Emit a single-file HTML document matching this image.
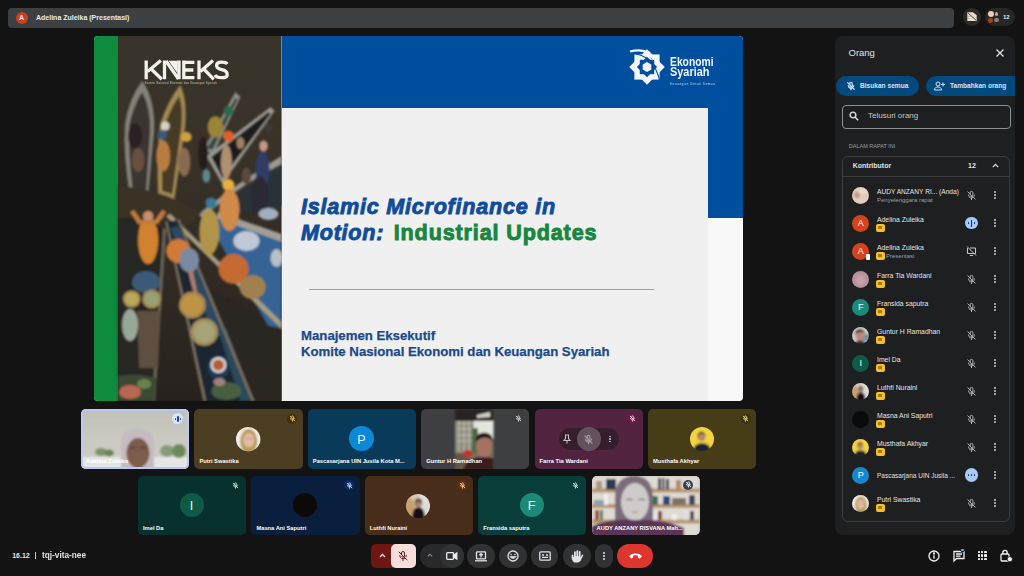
<!DOCTYPE html>
<html><head><meta charset="utf-8">
<style>
*{margin:0;padding:0;box-sizing:border-box}
html,body{width:1024px;height:576px;overflow:hidden;background:#131314;font-family:"Liberation Sans",sans-serif;color:#e3e3e3}
.a{position:absolute}
.t{position:absolute;white-space:nowrap}
svg.a{overflow:visible}
</style></head><body>
<div class="a" style="left:8px;top:8px;width:946px;height:20px;background:#3c4043;border-radius:4px"></div>
<div class="a" style="left:15.5px;top:11.5px;width:12px;height:12px;border-radius:50%;background:#c8401e"></div>
<div class="t" style="left:15.5px;top:13px;width:12px;text-align:center;font-size:7px;font-weight:bold;color:#fde;line-height:10px">A</div>
<div class="t" style="left:36px;top:12.5px;font-size:7px;font-weight:bold;color:#e8eaed;line-height:10px">Adelina Zuleika (Presentasi)</div>
<div class="a" style="left:963px;top:7.8px;width:17.6px;height:18px;border-radius:50%;background:#2b2a2a"></div>
<svg class="a" style="left:966.5px;top:12.3px" width="10" height="9.2" viewBox="0 0 10 9.2"><path d="M0.3 0.3H6L9.7 3.2V8.9H0.3z" fill="#eedccb"/><path d="M0.8 0.8L9.2 8.4" stroke="#3a3430" stroke-width="0.9"/><path d="M1 4.5H4M1 6.5H3" stroke="#b8a898" stroke-width="0.6"/></svg>
<div class="a" style="left:984.7px;top:7.8px;width:30.6px;height:18px;border-radius:9px;background:#272727"></div>
<div class="a" style="left:988px;top:10.8px;width:6.2px;height:6.2px;border-radius:50%;background:#e6cfc0"></div>
<div class="a" style="left:994.8px;top:12px;width:3.6px;height:3.6px;border-radius:50%;background:#b8a8a8"></div>
<div class="a" style="left:988.3px;top:17.8px;width:4.8px;height:4.8px;border-radius:50%;background:#a8401c"></div>
<div class="a" style="left:994.4px;top:18.4px;width:4.2px;height:4px;border-radius:50%;background:#8a8080"></div>
<div class="t" style="left:1003px;top:13px;font-size:6px;font-weight:bold;color:#e3e3e3;line-height:8px">12</div>
<div class="a" style="left:94px;top:36px;width:649px;height:365px;border-radius:4px;overflow:hidden;background:#f8f8f9">
  <div class="a" style="left:0;top:0;width:24px;height:365px;background:#0f8b3d"></div>
  <svg class="a" style="left:24px;top:0" width="163.6" height="365" viewBox="0 0 163 365" preserveAspectRatio="none"><defs><filter id="bl" x="-10%" y="-10%" width="120%" height="120%"><feGaussianBlur stdDeviation="0.9"/></filter><linearGradient id="wat" x1="0" y1="0" x2="0" y2="1"><stop offset="0" stop-color="#38342a"/><stop offset="0.3" stop-color="#393229"/><stop offset="0.7" stop-color="#2f2922"/><stop offset="1" stop-color="#27221e"/></linearGradient></defs><rect width="163" height="365" fill="url(#wat)"/><g filter="url(#bl)"><path d="M24 45 Q37 62 36 95 L30 160 L12 160 Q5 120 7 88 Q11 62 24 45z" fill="#85827a"/><path d="M24 56 Q33 72 32 96 L28 156 L15 156 Q10 118 11 90 Q15 70 24 56z" fill="#3a3632"/><path d="M62 49 Q69 62 67 90 L56 165 L40 160 Q38 118 42 88 Q50 64 62 49z" fill="#a08a50"/><path d="M61 60 Q65 72 63 92 L54 158 L44 155 Q43 118 46 92 Q52 72 61 60z" fill="#463a28"/><path d="M117 56 L122 61 L95 118 L85 114z" fill="#8a8e86"/><path d="M117 62 L119 64 L94 114 L89 112z" fill="#3a4644"/><ellipse cx="110" cy="75" rx="5" ry="5" fill="#2a6a50"/><path d="M152 71 L156 75 L104 148 L88 120z" fill="#9a9a90"/><path d="M150 76 L152 78 L104 142 L93 121z" fill="#1e1e1c"/><path d="M163 120 L163 128 Q120 150 84 182 L80 178 Q120 146 163 120z" fill="#9a9a90"/><path d="M163 128 Q124 152 88 182 L163 170z" fill="#2c3038"/><ellipse cx="97" cy="91" rx="7.8" ry="11.0" fill="#9a8434"/><ellipse cx="17" cy="100" rx="7.0" ry="12.8" fill="#2a2420"/><ellipse cx="20" cy="124" rx="6.2" ry="11.9" fill="#6a5040"/><ellipse cx="22" cy="146" rx="4.7" ry="8.5" fill="#3a3430"/><circle cx="47" cy="90" r="4.5" fill="#d8d0c4"/><ellipse cx="44" cy="99" rx="4.7" ry="5.1" fill="#3a5a80"/><ellipse cx="45" cy="120" rx="7.0" ry="15.3" fill="#b87c40"/><ellipse cx="68" cy="101" rx="5.5" ry="5.1" fill="#d0a040"/><ellipse cx="66" cy="126" rx="6.2" ry="14.4" fill="#8a6a50"/><ellipse cx="85" cy="118" rx="4.7" ry="17.0" fill="#241e1c"/><ellipse cx="88" cy="140" rx="3.9" ry="6.8" fill="#5a8a90"/><circle cx="110" cy="100" r="5.5" fill="#e0602a"/><ellipse cx="108" cy="126" rx="5.5" ry="17.0" fill="#b09070"/><ellipse cx="145" cy="110" rx="4.3" ry="5.5" fill="#c09888"/><ellipse cx="144" cy="134" rx="7.0" ry="18.7" fill="#2e3c68"/><ellipse cx="122" cy="107" rx="3.9" ry="6.0" fill="#a08060"/><ellipse cx="128" cy="140" rx="4.7" ry="8.5" fill="#5a4a40"/><ellipse cx="150" cy="92" rx="4.7" ry="4.2" fill="#3a3a36"/><path d="M0 150 Q40 152 84 176 L70 190 Q40 180 0 182z" fill="#3a3027"/><path d="M86 250 L163 290 V365 H130z" fill="#2c2520"/><path d="M92 178 L163 206 V292 L150 290 Q120 240 92 190z" fill="#346494"/><path d="M48 180 L52 178 L163 286 V293z" fill="#a89c80"/><path d="M100 176 L163 198 V206 L98 182z" fill="#a0a098"/><path d="M47 186 L60 184 L135 365 H86z" fill="#1c2630"/><path d="M52 192 L60 190 L110 300 L96 300z" fill="#2e5270" opacity="0.8"/><path d="M100 294 L108 292 L134 365 H122z" fill="#2a4a5a"/><path d="M47 186 L49 185 L88 365 H85z" fill="#7a7060"/><path d="M59 184 L61 183 L136 365 H133z" fill="#7a7060"/><path d="M0 182 H14 L47 194 L36 365 H0z" fill="#262624"/><path d="M45 192 L48 193 L37 365 H34z" fill="#6a6458"/><path d="M19 275 L42 275 L40 332 L21 332z" fill="#5e5040"/><ellipse cx="30" cy="204" rx="10" ry="24" fill="#d2822e"/><circle cx="30" cy="180" r="5" fill="#c89070"/><path d="M12 176 L20 188 L40 188 L48 176 L44 174 L37 184 L23 184 L16 174z" fill="#c07a40"/><circle cx="92.7" cy="167" r="5.5" fill="#3a7a9a"/><ellipse cx="91" cy="196" rx="10" ry="23" fill="#b09448"/><circle cx="110" cy="149" r="6" fill="#e8b040"/><ellipse cx="111" cy="174" rx="10" ry="21" fill="#d08a48"/><ellipse cx="141" cy="160" rx="9" ry="20" fill="#2c2a34"/><ellipse cx="150" cy="178" rx="10" ry="6" fill="#a0b0c0"/><ellipse cx="60" cy="215" rx="12" ry="12" fill="#d07a38"/><ellipse cx="71" cy="224" rx="10" ry="12" fill="#7a8aa0"/><path d="M74 232 L80 262 L77 263 L70 236z" fill="#b08070"/><ellipse cx="28" cy="246" rx="14" ry="11" fill="#3a5a78"/><ellipse cx="128" cy="205" rx="13" ry="10" fill="#c0c8d8"/><ellipse cx="115" cy="233" rx="15" ry="15" fill="#c46a32"/><ellipse cx="134" cy="251" rx="13" ry="12" fill="#a08050"/><ellipse cx="158" cy="222" rx="6" ry="9" fill="#b8c0c8"/><circle cx="13.7" cy="263" r="8.8" fill="#a08850"/><circle cx="13.7" cy="263" r="6.864000000000001" fill="#b8a858"/><circle cx="33.6" cy="263" r="9.5" fill="#a08850"/><circle cx="33.6" cy="263" r="7.41" fill="#98a074"/><circle cx="74" cy="269" r="13.5" fill="#a88650"/><circle cx="74" cy="269" r="10.530000000000001" fill="#c09444"/><circle cx="86" cy="296" r="13.7" fill="#a48c5c"/><circle cx="86" cy="296" r="10.686" fill="#a4a474"/><ellipse cx="12" cy="289" rx="8" ry="16" fill="#98a898"/><circle cx="100" cy="332" r="11" fill="#1e3a50"/><circle cx="100" cy="329" r="8" fill="#d8d8e0"/><circle cx="100" cy="329" r="5.6" fill="#b85a30"/><ellipse cx="108" cy="355" rx="15" ry="9" fill="#4a6040"/><ellipse cx="101" cy="346" rx="6" ry="4" fill="#a08080"/><path d="M0 340 Q18 336 38 342 L36 365 H0z" fill="#3a4a30"/><ellipse cx="12" cy="356" rx="11" ry="7" fill="#b86850"/><ellipse cx="26" cy="348" rx="7" ry="5" fill="#6a8050"/></g></svg>
  <div class="a" style="left:187.5px;top:0;width:461.5px;height:72px;background:#004f9e"></div>
  <div class="a" style="left:613px;top:72px;width:36px;height:110px;background:#004f9e"></div>
  <div class="a" style="left:187.5px;top:71.8px;width:426.3px;height:293.2px;background:#f0f0f1"></div>
</div>
<div class="t" style="left:301px;top:193.6px;font-size:21.6px;font-weight:bold;font-style:italic;color:#0f4c9a;line-height:26px;letter-spacing:0.75px;-webkit-text-stroke:0.9px #0f4c9a">Islamic Microfinance in<br>Motion:<span style="margin-left:9.5px;color:#17873f;font-style:normal;letter-spacing:0.85px;-webkit-text-stroke:0.9px #17873f">Industrial Updates</span></div>
<svg class="a" style="left:0;top:0" width="300" height="100" viewBox="0 0 300 100" fill="none" stroke="#f4f1ec" stroke-width="3.3"><path d="M146.2 60.6V79.3M160.8 60.6L147.6 71.6M151.2 69L161.8 79.3"/><path d="M164.5 60.6V79.3M179 60.6V79.3M166 61L178.5 79"/><path d="M168.5 60.8H177.6V73.5z" fill="#f4f1ec" stroke="none"/><path d="M183.8 60.6V79.3M182.2 62.3H194.4M182.2 70H193.4M182.2 77.6H194.4"/><path d="M199 60.6V79.3M213 60.6L200.4 71.6M203.8 69L213.8 79.3"/><path d="M227.3 64Q226 62.2 221.2 62.2Q216.6 62.2 216.6 65.6Q216.6 68.6 221.6 69.6Q227.2 70.6 227.2 74.4Q227.2 77.7 221.6 77.7Q216.4 77.7 215 75"/></svg>
<div class="t" style="left:145px;top:82.4px;font-size:2.7px;color:#d8d0c4;line-height:4px;letter-spacing:0.3px">Komite Nasional Ekonomi dan Keuangan Syariah</div>
<svg class="a" style="left:629px;top:48px" width="37" height="38" viewBox="0 0 37 38"><g transform="translate(18 19)"><rect x="-12.6" y="-12.6" width="25.2" height="25.2" fill="#f4f6fa"/><rect x="-12.6" y="-12.6" width="25.2" height="25.2" fill="#f4f6fa" transform="rotate(45)"/><rect x="-7.2" y="-7.2" width="14.4" height="14.4" fill="#004f9e"/><rect x="-7.2" y="-7.2" width="14.4" height="14.4" fill="#004f9e" transform="rotate(45)"/><path d="M0 -5L4.3 -2.5V2.5L0 5L-4.3 2.5V-2.5z" fill="#f4f6fa"/></g><path d="M1 3.5Q12 0.5 21 5" fill="none" stroke="#f4f6fa" stroke-width="2.2"/><path d="M2 5.5Q25 6 31 34" fill="none" stroke="#004f9e" stroke-width="1.2"/><path d="M22 9.5L23.5 12.5" stroke="#c8a070" stroke-width="0.9"/></svg>
<div class="t" style="left:669.5px;top:54.5px;font-size:12px;font-weight:bold;color:#f4f6fa;line-height:14px;transform:scaleX(0.86);transform-origin:0 0">Ekonomi</div>
<div class="t" style="left:669.5px;top:64.8px;font-size:12px;font-weight:bold;color:#f4f6fa;line-height:14px;transform:scaleX(0.91);transform-origin:0 0">Syariah</div>
<div class="t" style="left:670px;top:81.5px;font-size:2.8px;color:#dde6f5;line-height:4px;letter-spacing:0.75px">Keuangan Untuk Semua</div>
<div class="a" style="left:309.4px;top:289px;width:345px;height:1px;background:#a0a0a0"></div>
<div class="t" style="left:301px;top:327.5px;font-size:13.2px;font-weight:bold;color:#1a4a8a;line-height:16px;-webkit-text-stroke:0.25px #1a4a8a">Manajemen Eksekutif<br>Komite Nasional Ekonomi dan Keuangan Syariah</div>
<div class="a" style="left:835.3px;top:36px;width:180px;height:499px;border-radius:8px;background:#1e1f20;overflow:hidden">
<div class="a" style="left:1.2px;top:40px;width:83px;height:20px;border-radius:10px;background:#024a7e"></div>
<div class="a" style="left:90.7px;top:40px;width:100px;height:20px;border-radius:10px;background:#024a7e"></div>
</div>
<div class="t" style="left:848.5px;top:47px;font-size:9.5px;color:#e3e3e3;line-height:12px">Orang</div>
<svg class="a" style="left:995.5px;top:48.5px" width="8" height="8" viewBox="0 0 8 8" stroke="#e3e3e3" stroke-width="1.3"><path d="M0.5 0.5L7.5 7.5M7.5 0.5L0.5 7.5"/></svg>
<svg class="a" style="left:846.0px;top:81.0px" width="10" height="10" viewBox="0 0 24 24" fill="none" stroke="#d3e3fd" stroke-width="2.88" stroke-linecap="round"><path d="M9 9V6a3 3 0 0 1 6 0v5.5"/><path d="M9.5 13.5A3 3 0 0 0 14.6 13"/><path d="M5.5 11a6.5 6.5 0 0 0 10.3 5.3M18.5 11a6.4 6.4 0 0 1-.6 2.6"/><path d="M12 17.5V21"/><path d="M4 4l16 16"/></svg>
<div class="t" style="left:860px;top:81px;font-size:6.6px;font-weight:bold;color:#d3e3fd;line-height:10px">Bisukan semua</div>
<svg class="a" style="left:934px;top:81px" width="11" height="10" viewBox="0 0 22 20" fill="none" stroke="#d3e3fd" stroke-width="2"><circle cx="8" cy="6" r="4"/><path d="M1 18c0-4 3-6 7-6s7 2 7 6z"/><path d="M18 3v8M14 7h8"/></svg>
<div class="t" style="left:950px;top:81px;font-size:6.6px;font-weight:bold;color:#d3e3fd;line-height:10px">Tambahkan orang</div>
<div class="a" style="left:842px;top:105px;width:169px;height:23.5px;border:1px solid #8e918f;border-radius:4px"></div>
<svg class="a" style="left:849px;top:111px" width="10" height="10" viewBox="0 0 10 10" fill="none" stroke="#e3e3e3" stroke-width="1.4"><circle cx="4" cy="4" r="2.9"/><path d="M6.2 6.2L9.2 9.2"/></svg>
<div class="t" style="left:868px;top:111px;font-size:8px;color:#c4c7c5;line-height:10px">Telusuri orang</div>
<div class="t" style="left:848.8px;top:142px;font-size:5.5px;color:#9aa0a6;line-height:8px">DALAM RAPAT INI</div>
<div class="a" style="left:842.3px;top:155.8px;width:168px;height:366px;border:1px solid #3c3d3f;border-radius:6px"></div>
<div class="a" style="left:843px;top:176px;width:166px;height:1px;background:#3c3d3f"></div>
<div class="t" style="left:852.7px;top:161px;font-size:7px;font-weight:bold;color:#e3e3e3;line-height:9px">Kontributor</div>
<div class="t" style="left:968px;top:161px;font-size:7px;font-weight:bold;color:#e3e3e3;line-height:9px">12</div>
<svg class="a" style="left:992px;top:162.5px" width="7" height="5" viewBox="0 0 7 5" fill="none" stroke="#e3e3e3" stroke-width="1.2"><path d="M0.8 4.2L3.5 1.4L6.2 4.2"/></svg>
<svg class="a" style="left:852.2px;top:186.5px" width="17" height="17" viewBox="0 0 24 24"><defs><clipPath id="av1"><circle cx="12" cy="12" r="12"/></clipPath><filter id="avf1" x="-20%" y="-20%" width="140%" height="140%"><feGaussianBlur stdDeviation="1.27"/></filter></defs><g clip-path="url(#av1)"><g filter="url(#avf1)"><rect x="-2" y="-2" width="28" height="28" fill="#e4ccbc"/><ellipse cx="7" cy="11" rx="4" ry="5" fill="#c49888"/><ellipse cx="15" cy="6" rx="8" ry="3" fill="#ecdccc"/></g></g></svg>
<div class="t" style="left:877px;top:186.8px;font-size:6.6px;color:#e6e6e6;line-height:9px">AUDY ANZANY RI... (Anda)</div>
<div class="t" style="left:877px;top:195.5px;font-size:6px;color:#9aa0a6;line-height:8px">Penyelenggara rapat</div>
<svg class="a" style="left:965.5px;top:190.1px" width="11" height="11" viewBox="0 0 24 24" fill="none" stroke="#b8bbbd" stroke-width="2.0727272727272723" stroke-linecap="round"><path d="M9 9V6a3 3 0 0 1 6 0v5.5"/><path d="M9.5 13.5A3 3 0 0 0 14.6 13"/><path d="M5.5 11a6.5 6.5 0 0 0 10.3 5.3M18.5 11a6.4 6.4 0 0 1-.6 2.6"/><path d="M12 17.5V21"/><path d="M4 4l16 16"/></svg>
<div class="a" style="left:994.3px;top:190.95000000000002px;width:2.2px;height:2.2px;border-radius:50%;background:#c8cacb"></div><div class="a" style="left:994.3px;top:193.9px;width:2.2px;height:2.2px;border-radius:50%;background:#c8cacb"></div><div class="a" style="left:994.3px;top:196.85px;width:2.2px;height:2.2px;border-radius:50%;background:#c8cacb"></div>
<div class="a" style="left:852.2px;top:214.5px;width:17px;height:17px;border-radius:50%;background:#d4431d"></div>
<div class="t" style="left:852.2px;top:218px;width:17px;text-align:center;font-size:9px;color:#fff;line-height:10px">A</div>
<div class="t" style="left:877px;top:214.8px;font-size:6.85px;color:#e6e6e6;line-height:9px">Adelina Zuleika</div>
<div class="a" style="left:876.2px;top:223.5px;width:8.8px;height:8.3px;border-radius:2px;background:#f2c12e"></div>
<div class="a" style="left:878.3px;top:225.6px;width:3.6px;height:3.8px;background:#b0780c;border-radius:0.5px"></div>
<div class="a" style="left:965px;top:216.6px;width:12.8px;height:12.8px;border-radius:50%;background:#a8c7fa"></div>
<div class="a" style="left:970.6px;top:219.5px;width:1.6px;height:7px;border-radius:1px;background:#062e6f"></div>
<div class="a" style="left:967.7px;top:221.8px;width:1.6px;height:2.4px;border-radius:1px;background:#062e6f"></div>
<div class="a" style="left:973.5px;top:221.8px;width:1.6px;height:2.4px;border-radius:1px;background:#062e6f"></div>
<div class="a" style="left:994.3px;top:218.95000000000002px;width:2.2px;height:2.2px;border-radius:50%;background:#c8cacb"></div><div class="a" style="left:994.3px;top:221.9px;width:2.2px;height:2.2px;border-radius:50%;background:#c8cacb"></div><div class="a" style="left:994.3px;top:224.85px;width:2.2px;height:2.2px;border-radius:50%;background:#c8cacb"></div>
<div class="a" style="left:852.2px;top:242.5px;width:17px;height:17px;border-radius:50%;background:#d4431d"></div>
<div class="t" style="left:852.2px;top:246px;width:17px;text-align:center;font-size:9px;color:#fff;line-height:10px">A</div>
<div class="t" style="left:877px;top:242.8px;font-size:6.85px;color:#e6e6e6;line-height:9px">Adelina Zuleika</div>
<div class="a" style="left:876.2px;top:251.5px;width:8.8px;height:8.3px;border-radius:2px;background:#f2c12e"></div>
<div class="a" style="left:878.3px;top:253.6px;width:3.6px;height:3.8px;background:#b0780c;border-radius:0.5px"></div>
<div class="t" style="left:886px;top:252px;font-size:6px;color:#9aa0a6;line-height:8px">Presentasi</div>
<div class="a" style="left:866px;top:254px;width:4px;height:6px;background:#fff;border-radius:1px"></div>
<svg class="a" style="left:966px;top:246px" width="11" height="10" viewBox="0 0 22 20" fill="none" stroke="#c4c7c5" stroke-width="2"><path d="M3 4v11h16V4M8 4h11"/><path d="M8 19h6"/><path d="M2 1l18 18"/></svg>
<div class="a" style="left:994.3px;top:246.95000000000002px;width:2.2px;height:2.2px;border-radius:50%;background:#c8cacb"></div><div class="a" style="left:994.3px;top:249.9px;width:2.2px;height:2.2px;border-radius:50%;background:#c8cacb"></div><div class="a" style="left:994.3px;top:252.85px;width:2.2px;height:2.2px;border-radius:50%;background:#c8cacb"></div>
<svg class="a" style="left:852.2px;top:270.5px" width="17" height="17" viewBox="0 0 24 24"><defs><clipPath id="av2"><circle cx="12" cy="12" r="12"/></clipPath><filter id="avf2" x="-20%" y="-20%" width="140%" height="140%"><feGaussianBlur stdDeviation="1.27"/></filter></defs><g clip-path="url(#av2)"><g filter="url(#avf2)"><rect x="-2" y="-2" width="28" height="28" fill="#b8909c"/><ellipse cx="12" cy="13" rx="6" ry="7" fill="#c8a0ac"/></g></g></svg>
<div class="t" style="left:877px;top:270.8px;font-size:6.85px;color:#e6e6e6;line-height:9px">Farra Tia Wardani</div>
<div class="a" style="left:876.2px;top:279.5px;width:8.8px;height:8.3px;border-radius:2px;background:#f2c12e"></div>
<div class="a" style="left:878.3px;top:281.6px;width:3.6px;height:3.8px;background:#b0780c;border-radius:0.5px"></div>
<svg class="a" style="left:965.5px;top:274.1px" width="11" height="11" viewBox="0 0 24 24" fill="none" stroke="#b8bbbd" stroke-width="2.0727272727272723" stroke-linecap="round"><path d="M9 9V6a3 3 0 0 1 6 0v5.5"/><path d="M9.5 13.5A3 3 0 0 0 14.6 13"/><path d="M5.5 11a6.5 6.5 0 0 0 10.3 5.3M18.5 11a6.4 6.4 0 0 1-.6 2.6"/><path d="M12 17.5V21"/><path d="M4 4l16 16"/></svg>
<div class="a" style="left:994.3px;top:274.95px;width:2.2px;height:2.2px;border-radius:50%;background:#c8cacb"></div><div class="a" style="left:994.3px;top:277.9px;width:2.2px;height:2.2px;border-radius:50%;background:#c8cacb"></div><div class="a" style="left:994.3px;top:280.84999999999997px;width:2.2px;height:2.2px;border-radius:50%;background:#c8cacb"></div>
<div class="a" style="left:852.2px;top:298.5px;width:17px;height:17px;border-radius:50%;background:#1b8a77"></div>
<div class="t" style="left:852.2px;top:302px;width:17px;text-align:center;font-size:9px;color:#fff;line-height:10px">F</div>
<div class="t" style="left:877px;top:298.8px;font-size:6.85px;color:#e6e6e6;line-height:9px">Fransida saputra</div>
<div class="a" style="left:876.2px;top:307.5px;width:8.8px;height:8.3px;border-radius:2px;background:#f2c12e"></div>
<div class="a" style="left:878.3px;top:309.6px;width:3.6px;height:3.8px;background:#b0780c;border-radius:0.5px"></div>
<svg class="a" style="left:965.5px;top:302.1px" width="11" height="11" viewBox="0 0 24 24" fill="none" stroke="#b8bbbd" stroke-width="2.0727272727272723" stroke-linecap="round"><path d="M9 9V6a3 3 0 0 1 6 0v5.5"/><path d="M9.5 13.5A3 3 0 0 0 14.6 13"/><path d="M5.5 11a6.5 6.5 0 0 0 10.3 5.3M18.5 11a6.4 6.4 0 0 1-.6 2.6"/><path d="M12 17.5V21"/><path d="M4 4l16 16"/></svg>
<div class="a" style="left:994.3px;top:302.95px;width:2.2px;height:2.2px;border-radius:50%;background:#c8cacb"></div><div class="a" style="left:994.3px;top:305.9px;width:2.2px;height:2.2px;border-radius:50%;background:#c8cacb"></div><div class="a" style="left:994.3px;top:308.84999999999997px;width:2.2px;height:2.2px;border-radius:50%;background:#c8cacb"></div>
<svg class="a" style="left:852.2px;top:326.5px" width="17" height="17" viewBox="0 0 24 24"><defs><clipPath id="av3"><circle cx="12" cy="12" r="12"/></clipPath><filter id="avf3" x="-20%" y="-20%" width="140%" height="140%"><feGaussianBlur stdDeviation="1.27"/></filter></defs><g clip-path="url(#av3)"><g filter="url(#avf3)"><rect x="-2" y="-2" width="28" height="28" fill="#c8ccc8"/><rect x="14" y="10" width="12" height="10" fill="#7a90a8"/><ellipse cx="11" cy="12.5" rx="6" ry="7" fill="#c08a70"/><path d="M4 10Q5 3 11 3Q17 3 18 9Q14 6 10 7Q7 8 4 10z" fill="#2a1e1c"/><path d="M2 26Q4 19 11 19Q18 19 20 26z" fill="#2a2a2a"/></g></g></svg>
<div class="t" style="left:877px;top:326.8px;font-size:6.85px;color:#e6e6e6;line-height:9px">Guntur H Ramadhan</div>
<div class="a" style="left:876.2px;top:335.5px;width:8.8px;height:8.3px;border-radius:2px;background:#f2c12e"></div>
<div class="a" style="left:878.3px;top:337.6px;width:3.6px;height:3.8px;background:#b0780c;border-radius:0.5px"></div>
<svg class="a" style="left:965.5px;top:330.1px" width="11" height="11" viewBox="0 0 24 24" fill="none" stroke="#b8bbbd" stroke-width="2.0727272727272723" stroke-linecap="round"><path d="M9 9V6a3 3 0 0 1 6 0v5.5"/><path d="M9.5 13.5A3 3 0 0 0 14.6 13"/><path d="M5.5 11a6.5 6.5 0 0 0 10.3 5.3M18.5 11a6.4 6.4 0 0 1-.6 2.6"/><path d="M12 17.5V21"/><path d="M4 4l16 16"/></svg>
<div class="a" style="left:994.3px;top:330.95px;width:2.2px;height:2.2px;border-radius:50%;background:#c8cacb"></div><div class="a" style="left:994.3px;top:333.9px;width:2.2px;height:2.2px;border-radius:50%;background:#c8cacb"></div><div class="a" style="left:994.3px;top:336.84999999999997px;width:2.2px;height:2.2px;border-radius:50%;background:#c8cacb"></div>
<div class="a" style="left:852.2px;top:354.5px;width:17px;height:17px;border-radius:50%;background:#0e5b46"></div>
<div class="t" style="left:852.2px;top:358px;width:17px;text-align:center;font-size:9px;color:#fff;line-height:10px">I</div>
<div class="t" style="left:877px;top:354.8px;font-size:6.85px;color:#e6e6e6;line-height:9px">Imel Da</div>
<div class="a" style="left:876.2px;top:363.5px;width:8.8px;height:8.3px;border-radius:2px;background:#f2c12e"></div>
<div class="a" style="left:878.3px;top:365.6px;width:3.6px;height:3.8px;background:#b0780c;border-radius:0.5px"></div>
<svg class="a" style="left:965.5px;top:358.1px" width="11" height="11" viewBox="0 0 24 24" fill="none" stroke="#b8bbbd" stroke-width="2.0727272727272723" stroke-linecap="round"><path d="M9 9V6a3 3 0 0 1 6 0v5.5"/><path d="M9.5 13.5A3 3 0 0 0 14.6 13"/><path d="M5.5 11a6.5 6.5 0 0 0 10.3 5.3M18.5 11a6.4 6.4 0 0 1-.6 2.6"/><path d="M12 17.5V21"/><path d="M4 4l16 16"/></svg>
<div class="a" style="left:994.3px;top:358.95px;width:2.2px;height:2.2px;border-radius:50%;background:#c8cacb"></div><div class="a" style="left:994.3px;top:361.9px;width:2.2px;height:2.2px;border-radius:50%;background:#c8cacb"></div><div class="a" style="left:994.3px;top:364.84999999999997px;width:2.2px;height:2.2px;border-radius:50%;background:#c8cacb"></div>
<svg class="a" style="left:852.2px;top:382.5px" width="17" height="17" viewBox="0 0 24 24"><defs><clipPath id="av4"><circle cx="12" cy="12" r="12"/></clipPath><filter id="avf4" x="-20%" y="-20%" width="140%" height="140%"><feGaussianBlur stdDeviation="1.27"/></filter></defs><g clip-path="url(#av4)"><g filter="url(#avf4)"><rect x="-2" y="-2" width="28" height="28" fill="#d8c8b0"/><rect x="13" y="-2" width="14" height="28" fill="#e0dcd8"/><ellipse cx="4" cy="14" rx="5" ry="10" fill="#c8a070"/><ellipse cx="12.5" cy="8.5" rx="3.5" ry="4" fill="#3a2420"/><ellipse cx="12.6" cy="9.6" rx="2.4" ry="2.8" fill="#b08070"/><path d="M6 26Q6 13 12.5 13Q19 13 19 26z" fill="#151012"/></g></g></svg>
<div class="t" style="left:877px;top:382.8px;font-size:6.85px;color:#e6e6e6;line-height:9px">Luthfi Nuraini</div>
<div class="a" style="left:876.2px;top:391.5px;width:8.8px;height:8.3px;border-radius:2px;background:#f2c12e"></div>
<div class="a" style="left:878.3px;top:393.6px;width:3.6px;height:3.8px;background:#b0780c;border-radius:0.5px"></div>
<svg class="a" style="left:965.5px;top:386.1px" width="11" height="11" viewBox="0 0 24 24" fill="none" stroke="#b8bbbd" stroke-width="2.0727272727272723" stroke-linecap="round"><path d="M9 9V6a3 3 0 0 1 6 0v5.5"/><path d="M9.5 13.5A3 3 0 0 0 14.6 13"/><path d="M5.5 11a6.5 6.5 0 0 0 10.3 5.3M18.5 11a6.4 6.4 0 0 1-.6 2.6"/><path d="M12 17.5V21"/><path d="M4 4l16 16"/></svg>
<div class="a" style="left:994.3px;top:386.95px;width:2.2px;height:2.2px;border-radius:50%;background:#c8cacb"></div><div class="a" style="left:994.3px;top:389.9px;width:2.2px;height:2.2px;border-radius:50%;background:#c8cacb"></div><div class="a" style="left:994.3px;top:392.84999999999997px;width:2.2px;height:2.2px;border-radius:50%;background:#c8cacb"></div>
<div class="a" style="left:852.2px;top:410.5px;width:17px;height:17px;border-radius:50%;background:#0c0b0c"></div>
<div class="t" style="left:877px;top:410.8px;font-size:6.85px;color:#e6e6e6;line-height:9px">Masna Ani Saputri</div>
<div class="a" style="left:876.2px;top:419.5px;width:8.8px;height:8.3px;border-radius:2px;background:#f2c12e"></div>
<div class="a" style="left:878.3px;top:421.6px;width:3.6px;height:3.8px;background:#b0780c;border-radius:0.5px"></div>
<svg class="a" style="left:965.5px;top:414.1px" width="11" height="11" viewBox="0 0 24 24" fill="none" stroke="#b8bbbd" stroke-width="2.0727272727272723" stroke-linecap="round"><path d="M9 9V6a3 3 0 0 1 6 0v5.5"/><path d="M9.5 13.5A3 3 0 0 0 14.6 13"/><path d="M5.5 11a6.5 6.5 0 0 0 10.3 5.3M18.5 11a6.4 6.4 0 0 1-.6 2.6"/><path d="M12 17.5V21"/><path d="M4 4l16 16"/></svg>
<div class="a" style="left:994.3px;top:414.95px;width:2.2px;height:2.2px;border-radius:50%;background:#c8cacb"></div><div class="a" style="left:994.3px;top:417.9px;width:2.2px;height:2.2px;border-radius:50%;background:#c8cacb"></div><div class="a" style="left:994.3px;top:420.84999999999997px;width:2.2px;height:2.2px;border-radius:50%;background:#c8cacb"></div>
<svg class="a" style="left:852.2px;top:438.5px" width="17" height="17" viewBox="0 0 24 24"><defs><clipPath id="av5"><circle cx="12" cy="12" r="12"/></clipPath><filter id="avf5" x="-20%" y="-20%" width="140%" height="140%"><feGaussianBlur stdDeviation="1.27"/></filter></defs><g clip-path="url(#av5)"><g filter="url(#avf5)"><rect x="-2" y="-2" width="28" height="28" fill="#f3d440"/><ellipse cx="11.5" cy="9" rx="4" ry="4.6" fill="#6a4a30"/><ellipse cx="11.8" cy="10.5" rx="3.2" ry="3.8" fill="#b88870"/><path d="M3 26Q3 16 12 16Q21 16 21 26z" fill="#1c2434"/></g></g></svg>
<div class="t" style="left:877px;top:438.8px;font-size:6.85px;color:#e6e6e6;line-height:9px">Musthafa Akhyar</div>
<div class="a" style="left:876.2px;top:447.5px;width:8.8px;height:8.3px;border-radius:2px;background:#f2c12e"></div>
<div class="a" style="left:878.3px;top:449.6px;width:3.6px;height:3.8px;background:#b0780c;border-radius:0.5px"></div>
<svg class="a" style="left:965.5px;top:442.1px" width="11" height="11" viewBox="0 0 24 24" fill="none" stroke="#b8bbbd" stroke-width="2.0727272727272723" stroke-linecap="round"><path d="M9 9V6a3 3 0 0 1 6 0v5.5"/><path d="M9.5 13.5A3 3 0 0 0 14.6 13"/><path d="M5.5 11a6.5 6.5 0 0 0 10.3 5.3M18.5 11a6.4 6.4 0 0 1-.6 2.6"/><path d="M12 17.5V21"/><path d="M4 4l16 16"/></svg>
<div class="a" style="left:994.3px;top:442.95px;width:2.2px;height:2.2px;border-radius:50%;background:#c8cacb"></div><div class="a" style="left:994.3px;top:445.9px;width:2.2px;height:2.2px;border-radius:50%;background:#c8cacb"></div><div class="a" style="left:994.3px;top:448.84999999999997px;width:2.2px;height:2.2px;border-radius:50%;background:#c8cacb"></div>
<div class="a" style="left:852.2px;top:466.5px;width:17px;height:17px;border-radius:50%;background:#1a86cf"></div>
<div class="t" style="left:852.2px;top:470px;width:17px;text-align:center;font-size:9px;color:#fff;line-height:10px">P</div>
<div class="t" style="left:877px;top:470.5px;font-size:6.5px;color:#e3e3e3;line-height:9px">Pascasarjana UIN Jusila ...</div>
<div class="a" style="left:964.6px;top:468.2px;width:13.6px;height:13.6px;border-radius:50%;background:#a8c7fa"></div>
<div class="a" style="left:967.6px;top:474.2px;width:1.6px;height:1.6px;border-radius:50%;background:#062e6f"></div><div class="a" style="left:970.6px;top:474.2px;width:1.6px;height:1.6px;border-radius:50%;background:#062e6f"></div><div class="a" style="left:973.6px;top:474.2px;width:1.6px;height:1.6px;border-radius:50%;background:#062e6f"></div>
<div class="a" style="left:994.3px;top:470.95px;width:2.2px;height:2.2px;border-radius:50%;background:#c8cacb"></div><div class="a" style="left:994.3px;top:473.9px;width:2.2px;height:2.2px;border-radius:50%;background:#c8cacb"></div><div class="a" style="left:994.3px;top:476.84999999999997px;width:2.2px;height:2.2px;border-radius:50%;background:#c8cacb"></div>
<svg class="a" style="left:852.2px;top:494.5px" width="17" height="17" viewBox="0 0 24 24"><defs><clipPath id="av6"><circle cx="12" cy="12" r="12"/></clipPath><filter id="avf6" x="-20%" y="-20%" width="140%" height="140%"><feGaussianBlur stdDeviation="1.27"/></filter></defs><g clip-path="url(#av6)"><g filter="url(#avf6)"><rect x="-2" y="-2" width="28" height="28" fill="#f4efe6"/><ellipse cx="12.5" cy="14" rx="8.5" ry="12" fill="#b89a58"/><ellipse cx="12.5" cy="13" rx="5.5" ry="7" fill="#e2bba4"/><path d="M9.5 11.5h2M13.5 11.5h2" stroke="#8a6050" stroke-width="0.8"/></g></g></svg>
<div class="t" style="left:877px;top:494.8px;font-size:6.85px;color:#e6e6e6;line-height:9px">Putri Swastika</div>
<div class="a" style="left:876.2px;top:503.5px;width:8.8px;height:8.3px;border-radius:2px;background:#f2c12e"></div>
<div class="a" style="left:878.3px;top:505.6px;width:3.6px;height:3.8px;background:#b0780c;border-radius:0.5px"></div>
<svg class="a" style="left:965.5px;top:498.1px" width="11" height="11" viewBox="0 0 24 24" fill="none" stroke="#b8bbbd" stroke-width="2.0727272727272723" stroke-linecap="round"><path d="M9 9V6a3 3 0 0 1 6 0v5.5"/><path d="M9.5 13.5A3 3 0 0 0 14.6 13"/><path d="M5.5 11a6.5 6.5 0 0 0 10.3 5.3M18.5 11a6.4 6.4 0 0 1-.6 2.6"/><path d="M12 17.5V21"/><path d="M4 4l16 16"/></svg>
<div class="a" style="left:994.3px;top:498.95px;width:2.2px;height:2.2px;border-radius:50%;background:#c8cacb"></div><div class="a" style="left:994.3px;top:501.9px;width:2.2px;height:2.2px;border-radius:50%;background:#c8cacb"></div><div class="a" style="left:994.3px;top:504.84999999999997px;width:2.2px;height:2.2px;border-radius:50%;background:#c8cacb"></div>
<div class="a" style="left:81px;top:409px;width:108.2px;height:60.4px;border-radius:5px;background:#d8d8d6;overflow:hidden"><svg class="a" style="left:0;top:0" width="107" height="61" viewBox="0 0 107 61"><defs><filter id="b1"><feGaussianBlur stdDeviation="1"/></filter><linearGradient id="g1" x1="0" y1="0" x2="0" y2="1"><stop offset="0" stop-color="#c0c0ba"/><stop offset="0.5" stop-color="#cacac2"/><stop offset="1" stop-color="#cdcdc6"/></linearGradient></defs><g filter="url(#b1)"><rect width="107" height="61" fill="url(#g1)"/><rect y="48" width="107" height="13" fill="#e6e6e4"/><ellipse cx="20" cy="43" rx="6" ry="4" fill="#7e9468"/><ellipse cx="28" cy="44" rx="5" ry="3.5" fill="#6a8458"/><ellipse cx="86" cy="42" rx="7" ry="6" fill="#8a9a78"/><ellipse cx="98" cy="42" rx="7" ry="7" fill="#6e8a5c"/><path d="M40 61V34Q40 20 56 20Q73 20 73 36V61z" fill="#c4bcc0"/><ellipse cx="57" cy="44" rx="11.5" ry="15" fill="#7c5c4c"/><path d="M49 39Q52 38 54 39M59 39Q62 38 65 39" stroke="#3a2820" stroke-width="1.2"/><path d="M44 61Q56 56 72 61z" fill="#4a4040"/></g></svg><div class="a" style="left:0;top:0;width:108.2px;height:60.4px;border-radius:5px;box-shadow:inset 0 0 0 2px #bcc8f4;"></div></div>
<div class="t" style="left:86px;top:457px;font-size:5.75px;font-weight:bold;color:#fff;line-height:8px">Adelina Zuleika</div>
<div class="a" style="left:172.3px;top:413.2px;width:11px;height:11px;border-radius:50%;background:#d8e4fc"></div>
<div class="a" style="left:177.1px;top:415.5px;width:1.5px;height:6.4px;background:#0b45b8;border-radius:1px"></div>
<div class="a" style="left:174.6px;top:417.5px;width:1.5px;height:2.4px;background:#0b45b8;border-radius:1px"></div>
<div class="a" style="left:179.6px;top:417.5px;width:1.5px;height:2.4px;background:#0b45b8;border-radius:1px"></div>
<div class="a" style="left:194.4px;top:409px;width:108.2px;height:60.4px;border-radius:5px;background:#4c3e22;overflow:hidden"><div class="a" style="left:0;top:0;width:108.2px;height:60.4px;border-radius:5px;"></div></div>
<div class="a" style="left:287.0px;top:413.5px;width:10px;height:10px;border-radius:50%;background:#3e300e"></div>
<svg class="a" style="left:288.5px;top:415.0px" width="7" height="7" viewBox="0 0 24 24" fill="none" stroke="#e0b848" stroke-width="3.4285714285714284" stroke-linecap="round"><path d="M9 9V6a3 3 0 0 1 6 0v5.5"/><path d="M9.5 13.5A3 3 0 0 0 14.6 13"/><path d="M5.5 11a6.5 6.5 0 0 0 10.3 5.3M18.5 11a6.4 6.4 0 0 1-.6 2.6"/><path d="M12 17.5V21"/><path d="M4 4l16 16"/></svg>
<div class="t" style="left:199.4px;top:457px;font-size:5.75px;font-weight:bold;color:#fff;line-height:8px">Putri Swastika</div>
<svg class="a" style="left:235.70000000000002px;top:427.2px" width="24.4" height="24.4" viewBox="0 0 24 24"><defs><clipPath id="av7"><circle cx="12" cy="12" r="12"/></clipPath><filter id="avf7" x="-20%" y="-20%" width="140%" height="140%"><feGaussianBlur stdDeviation="0.89"/></filter></defs><g clip-path="url(#av7)"><g filter="url(#avf7)"><rect x="-2" y="-2" width="28" height="28" fill="#f4efe6"/><ellipse cx="12.5" cy="14" rx="8.5" ry="12" fill="#b89a58"/><ellipse cx="12.5" cy="13" rx="5.5" ry="7" fill="#e2bba4"/><path d="M9.5 11.5h2M13.5 11.5h2" stroke="#8a6050" stroke-width="0.8"/></g></g></svg>
<div class="a" style="left:307.8px;top:409px;width:108.2px;height:60.4px;border-radius:5px;background:#0a3a5a;overflow:hidden"><div class="a" style="left:0;top:0;width:108.2px;height:60.4px;border-radius:5px;"></div></div>
<div class="t" style="left:312.8px;top:457px;font-size:5.75px;font-weight:bold;color:#fff;line-height:8px">Pascasarjana UIN Jusila Kota M...</div>
<div class="a" style="left:349.05px;top:426.35px;width:24.5px;height:24.5px;border-radius:50%;background:#0b88d6"></div><div class="t" style="left:349.05px;top:432.55px;width:24.5px;text-align:center;font-size:12.5px;color:#e8f6ff;line-height:14.374999999999998px">P</div>
<div class="a" style="left:421.2px;top:409px;width:108.2px;height:60.4px;border-radius:5px;background:#3d3f42;overflow:hidden"><svg class="a" style="left:34.2px;top:0" width="38.5" height="61" viewBox="0 0 38.5 61"><defs><filter id="b4"><feGaussianBlur stdDeviation="0.8"/></filter></defs><g filter="url(#b4)"><rect width="38.5" height="61" fill="#7a7060"/><rect x="0" y="9" width="18.5" height="35" fill="#8c8a7a"/><path d="M2 14h15M2 20h15M2 26h15M2 32h15M4 10v32M9 10v32M14 10v32" stroke="#c0beb0" stroke-width="1.2"/><rect x="18.5" y="11" width="20" height="19" fill="#e2e6de"/><rect x="17" y="19" width="6" height="25" fill="#4e6a44"/><rect x="0" y="0" width="38.5" height="12" fill="#2a2420"/><path d="M22 6L35 3V8L22 9z" fill="#d0d0c8"/><rect x="0" y="44" width="14" height="17" fill="#6a5444"/><ellipse cx="13" cy="44.5" rx="4.5" ry="3.5" fill="#c03030"/><ellipse cx="29" cy="37" rx="8" ry="12" fill="#a47262"/><path d="M20.5 33Q20 24 29 23.5Q38 24 38 32Q34 28 29 28.5Q24 29 20.5 33z" fill="#1e1816"/><path d="M8 61Q12 48 28 48Q38.5 48 38.5 50V61z" fill="#3a1c1c"/></g></svg><div class="a" style="left:0;top:0;width:108.2px;height:60.4px;border-radius:5px;"></div></div>
<div class="a" style="left:513.8px;top:413.5px;width:10px;height:10px;border-radius:50%;background:#3d3f42"></div>
<svg class="a" style="left:515.3px;top:415.0px" width="7" height="7" viewBox="0 0 24 24" fill="none" stroke="#c4c7c5" stroke-width="3.4285714285714284" stroke-linecap="round"><path d="M9 9V6a3 3 0 0 1 6 0v5.5"/><path d="M9.5 13.5A3 3 0 0 0 14.6 13"/><path d="M5.5 11a6.5 6.5 0 0 0 10.3 5.3M18.5 11a6.4 6.4 0 0 1-.6 2.6"/><path d="M12 17.5V21"/><path d="M4 4l16 16"/></svg>
<div class="t" style="left:426.2px;top:457px;font-size:5.75px;font-weight:bold;color:#fff;line-height:8px">Guntur H Ramadhan</div>
<div class="a" style="left:534.6px;top:409px;width:108.2px;height:60.4px;border-radius:5px;background:#53243f;overflow:hidden"><div class="a" style="left:0;top:0;width:108.2px;height:60.4px;border-radius:5px;"></div></div>
<div class="a" style="left:627.2px;top:413.5px;width:10px;height:10px;border-radius:50%;background:#6e1a4a"></div>
<svg class="a" style="left:628.7px;top:415.0px" width="7" height="7" viewBox="0 0 24 24" fill="none" stroke="#f0b8d8" stroke-width="3.4285714285714284" stroke-linecap="round"><path d="M9 9V6a3 3 0 0 1 6 0v5.5"/><path d="M9.5 13.5A3 3 0 0 0 14.6 13"/><path d="M5.5 11a6.5 6.5 0 0 0 10.3 5.3M18.5 11a6.4 6.4 0 0 1-.6 2.6"/><path d="M12 17.5V21"/><path d="M4 4l16 16"/></svg>
<div class="t" style="left:539.6px;top:457px;font-size:5.75px;font-weight:bold;color:#fff;line-height:8px">Farra Tia Wardani</div>
<div class="a" style="left:559.3px;top:428px;width:59.5px;height:22px;border-radius:11px;background:rgba(42,30,38,0.7)"></div>
<div class="a" style="left:576.5px;top:427px;width:24px;height:24px;border-radius:50%;background:rgba(130,115,125,0.6)"></div>
<svg class="a" style="left:583.0px;top:433.5px" width="11" height="11" viewBox="0 0 24 24" fill="none" stroke="#a89aa2" stroke-width="2.6181818181818177" stroke-linecap="round"><path d="M9 9V6a3 3 0 0 1 6 0v5.5"/><path d="M9.5 13.5A3 3 0 0 0 14.6 13"/><path d="M5.5 11a6.5 6.5 0 0 0 10.3 5.3M18.5 11a6.4 6.4 0 0 1-.6 2.6"/><path d="M12 17.5V21"/><path d="M4 4l16 16"/></svg>
<svg class="a" style="left:563px;top:434px" width="8" height="10" viewBox="0 0 8 10" fill="none" stroke="#c8c0c4" stroke-width="1.1"><path d="M2 1h4M2.5 1v3.5L1 6.5h6L5.5 4.5V1M4 6.5V9.5"/></svg>
<div class="a" style="left:609.0px;top:435.8px;width:1.6px;height:1.6px;border-radius:50%;background:#c8c0c4"></div><div class="a" style="left:609.0px;top:438.2px;width:1.6px;height:1.6px;border-radius:50%;background:#c8c0c4"></div><div class="a" style="left:609.0px;top:440.59999999999997px;width:1.6px;height:1.6px;border-radius:50%;background:#c8c0c4"></div>
<div class="a" style="left:648px;top:409px;width:108.2px;height:60.4px;border-radius:5px;background:#463d18;overflow:hidden"><div class="a" style="left:0;top:0;width:108.2px;height:60.4px;border-radius:5px;"></div></div>
<div class="a" style="left:740.6px;top:413.5px;width:10px;height:10px;border-radius:50%;background:#3a320c"></div>
<svg class="a" style="left:742.1px;top:415.0px" width="7" height="7" viewBox="0 0 24 24" fill="none" stroke="#e0c850" stroke-width="3.4285714285714284" stroke-linecap="round"><path d="M9 9V6a3 3 0 0 1 6 0v5.5"/><path d="M9.5 13.5A3 3 0 0 0 14.6 13"/><path d="M5.5 11a6.5 6.5 0 0 0 10.3 5.3M18.5 11a6.4 6.4 0 0 1-.6 2.6"/><path d="M12 17.5V21"/><path d="M4 4l16 16"/></svg>
<div class="t" style="left:653px;top:457px;font-size:5.75px;font-weight:bold;color:#fff;line-height:8px">Musthafa Akhyar</div>
<svg class="a" style="left:689.9px;top:426.5px" width="24" height="24" viewBox="0 0 24 24"><defs><clipPath id="av8"><circle cx="12" cy="12" r="12"/></clipPath><filter id="avf8" x="-20%" y="-20%" width="140%" height="140%"><feGaussianBlur stdDeviation="0.90"/></filter></defs><g clip-path="url(#av8)"><g filter="url(#avf8)"><rect x="-2" y="-2" width="28" height="28" fill="#f3d440"/><ellipse cx="11.5" cy="9" rx="4" ry="4.6" fill="#6a4a30"/><ellipse cx="11.8" cy="10.5" rx="3.2" ry="3.8" fill="#b88870"/><path d="M3 26Q3 16 12 16Q21 16 21 26z" fill="#1c2434"/></g></g></svg>
<div class="a" style="left:138px;top:475.8px;width:108.2px;height:59.6px;border-radius:5px;background:#08302c;overflow:hidden"><div class="a" style="left:0;top:0;width:108.2px;height:59.6px;border-radius:5px;"></div></div>
<div class="a" style="left:230.6px;top:480.3px;width:10px;height:10px;border-radius:50%;background:#08302c"></div>
<svg class="a" style="left:232.1px;top:481.8px" width="7" height="7" viewBox="0 0 24 24" fill="none" stroke="#a8e0c8" stroke-width="3.4285714285714284" stroke-linecap="round"><path d="M9 9V6a3 3 0 0 1 6 0v5.5"/><path d="M9.5 13.5A3 3 0 0 0 14.6 13"/><path d="M5.5 11a6.5 6.5 0 0 0 10.3 5.3M18.5 11a6.4 6.4 0 0 1-.6 2.6"/><path d="M12 17.5V21"/><path d="M4 4l16 16"/></svg>
<div class="t" style="left:143px;top:523.8px;font-size:5.75px;font-weight:bold;color:#fff;line-height:8px">Imel Da</div>
<div class="a" style="left:179.5px;top:493.3px;width:24px;height:24px;border-radius:50%;background:#0f5a46"></div><div class="t" style="left:179.5px;top:499.25px;width:24px;text-align:center;font-size:12.5px;color:#e6f6f0;line-height:14.374999999999998px">I</div>
<div class="a" style="left:251.4px;top:475.8px;width:108.2px;height:59.6px;border-radius:5px;background:#0a1f3d;overflow:hidden"><div class="a" style="left:0;top:0;width:108.2px;height:59.6px;border-radius:5px;"></div></div>
<div class="a" style="left:344.0px;top:480.3px;width:10px;height:10px;border-radius:50%;background:#0c2a68"></div>
<svg class="a" style="left:345.5px;top:481.8px" width="7" height="7" viewBox="0 0 24 24" fill="none" stroke="#b8cdf5" stroke-width="3.4285714285714284" stroke-linecap="round"><path d="M9 9V6a3 3 0 0 1 6 0v5.5"/><path d="M9.5 13.5A3 3 0 0 0 14.6 13"/><path d="M5.5 11a6.5 6.5 0 0 0 10.3 5.3M18.5 11a6.4 6.4 0 0 1-.6 2.6"/><path d="M12 17.5V21"/><path d="M4 4l16 16"/></svg>
<div class="t" style="left:256.4px;top:523.8px;font-size:5.75px;font-weight:bold;color:#fff;line-height:8px">Masna Ani Saputri</div>
<div class="a" style="left:292.9px;top:493.3px;width:24px;height:24px;border-radius:50%;background:#0d0909"></div>
<div class="a" style="left:364.8px;top:475.8px;width:108.2px;height:59.6px;border-radius:5px;background:#482e1a;overflow:hidden"><div class="a" style="left:0;top:0;width:108.2px;height:59.6px;border-radius:5px;"></div></div>
<div class="a" style="left:457.4px;top:480.3px;width:10px;height:10px;border-radius:50%;background:#5a300e"></div>
<svg class="a" style="left:458.9px;top:481.8px" width="7" height="7" viewBox="0 0 24 24" fill="none" stroke="#f0b080" stroke-width="3.4285714285714284" stroke-linecap="round"><path d="M9 9V6a3 3 0 0 1 6 0v5.5"/><path d="M9.5 13.5A3 3 0 0 0 14.6 13"/><path d="M5.5 11a6.5 6.5 0 0 0 10.3 5.3M18.5 11a6.4 6.4 0 0 1-.6 2.6"/><path d="M12 17.5V21"/><path d="M4 4l16 16"/></svg>
<div class="t" style="left:369.8px;top:523.8px;font-size:5.75px;font-weight:bold;color:#fff;line-height:8px">Luthfi Nuraini</div>
<svg class="a" style="left:406.1px;top:493.6px" width="24" height="24" viewBox="0 0 24 24"><defs><clipPath id="av9"><circle cx="12" cy="12" r="12"/></clipPath><filter id="avf9" x="-20%" y="-20%" width="140%" height="140%"><feGaussianBlur stdDeviation="0.90"/></filter></defs><g clip-path="url(#av9)"><g filter="url(#avf9)"><rect x="-2" y="-2" width="28" height="28" fill="#d8c8b0"/><rect x="13" y="-2" width="14" height="28" fill="#e0dcd8"/><ellipse cx="4" cy="14" rx="5" ry="10" fill="#c8a070"/><ellipse cx="12.5" cy="8.5" rx="3.5" ry="4" fill="#3a2420"/><ellipse cx="12.6" cy="9.6" rx="2.4" ry="2.8" fill="#b08070"/><path d="M6 26Q6 13 12.5 13Q19 13 19 26z" fill="#151012"/></g></g></svg>
<div class="a" style="left:478.2px;top:475.8px;width:108.2px;height:59.6px;border-radius:5px;background:#083d39;overflow:hidden"><div class="a" style="left:0;top:0;width:108.2px;height:59.6px;border-radius:5px;"></div></div>
<div class="a" style="left:570.8px;top:480.3px;width:10px;height:10px;border-radius:50%;background:#083d39"></div>
<svg class="a" style="left:572.3px;top:481.8px" width="7" height="7" viewBox="0 0 24 24" fill="none" stroke="#a8e0d0" stroke-width="3.4285714285714284" stroke-linecap="round"><path d="M9 9V6a3 3 0 0 1 6 0v5.5"/><path d="M9.5 13.5A3 3 0 0 0 14.6 13"/><path d="M5.5 11a6.5 6.5 0 0 0 10.3 5.3M18.5 11a6.4 6.4 0 0 1-.6 2.6"/><path d="M12 17.5V21"/><path d="M4 4l16 16"/></svg>
<div class="t" style="left:483.2px;top:523.8px;font-size:5.75px;font-weight:bold;color:#fff;line-height:8px">Fransida saputra</div>
<div class="a" style="left:519.7px;top:493.3px;width:24px;height:24px;border-radius:50%;background:#1c8a78"></div><div class="t" style="left:519.7px;top:499.25px;width:24px;text-align:center;font-size:12.5px;color:#e8f8f4;line-height:14.374999999999998px">F</div>
<div class="a" style="left:591.6px;top:475.8px;width:108.2px;height:59.6px;border-radius:5px;background:#c8c0b4;overflow:hidden"><svg class="a" style="left:0;top:0" width="107" height="61" viewBox="0 0 107 61"><defs><filter id="b11"><feGaussianBlur stdDeviation="0.8"/></filter></defs><g filter="url(#b11)"><rect width="107" height="61" fill="#dedad4"/><rect y="12.5" width="108" height="4" fill="#b89470"/><rect y="28" width="108" height="4" fill="#b89470"/><rect y="43.5" width="108" height="4" fill="#b89470"/><rect x="14" y="3" width="10" height="10.5" fill="#2a3a50"/><rect x="4" y="5" width="6" height="8.5" fill="#a89880"/><rect x="66" y="2" width="3" height="11.5" fill="#3a3a40"/><rect x="70" y="2" width="2.5" height="11.5" fill="#505058"/><rect x="74" y="3" width="3" height="10.5" fill="#3a3a48"/><rect x="84" y="4" width="5" height="9.5" fill="#b08a60"/><rect x="12" y="18" width="4" height="11" fill="#f0f0f0"/><rect x="2" y="24" width="10" height="5" fill="#8aa0b0"/><rect x="60" y="20" width="6" height="9" fill="#3a7050"/><rect x="71" y="20" width="7" height="9" fill="#2a4a78"/><rect x="80" y="22" width="14" height="7" fill="#807060"/><rect x="97" y="19" width="6" height="10" fill="#3a4a5a"/><rect x="3" y="34" width="4" height="10" fill="#a04030"/><rect x="8" y="34" width="3" height="10" fill="#3a8050"/><rect x="60" y="35" width="5" height="9" fill="#e8e8e8"/><rect x="66" y="35" width="4" height="9" fill="#8a4030"/><rect x="80" y="38" width="5" height="6" fill="#f0f0f0"/><rect x="92" y="34" width="4" height="10" fill="#e0e0e0"/><rect x="98" y="35" width="4" height="9" fill="#4a4a50"/><path d="M23 61V22Q23 0 42 0Q61 0 61 22V61z" fill="#7a6c7a"/><ellipse cx="43" cy="26" rx="14" ry="19" fill="#cfcbca"/><path d="M34 24Q38 22 41 24M46 24Q50 22 53 24" stroke="#807070" stroke-width="1"/><path d="M40 36Q43 37 46 36" stroke="#a08888" stroke-width="1"/><path d="M0 61V50Q20 42 43 44Q70 42 92 52V61z" fill="#5a3656"/></g></svg><div class="a" style="left:0;top:0;width:108.2px;height:59.6px;border-radius:5px;"></div></div>
<div class="t" style="left:596.6px;top:523.8px;font-size:5.75px;font-weight:bold;color:#fff;line-height:8px">AUDY ANZANY RISVANA Mah...</div>
<div class="a" style="left:683px;top:479.5px;width:10px;height:10px;border-radius:50%;background:#34424a"></div>
<svg class="a" style="left:684.5px;top:481.0px" width="7" height="7" viewBox="0 0 24 24" fill="none" stroke="#dde" stroke-width="3.4285714285714284" stroke-linecap="round"><path d="M9 9V6a3 3 0 0 1 6 0v5.5"/><path d="M9.5 13.5A3 3 0 0 0 14.6 13"/><path d="M5.5 11a6.5 6.5 0 0 0 10.3 5.3M18.5 11a6.4 6.4 0 0 1-.6 2.6"/><path d="M12 17.5V21"/><path d="M4 4l16 16"/></svg>
<div class="a" style="left:371px;top:544px;width:26px;height:24px;border-radius:5px 0 0 5px;background:#6f1612"></div>
<svg class="a" style="left:379px;top:552.5px" width="7" height="5" viewBox="0 0 7 5" fill="none" stroke="#f9dedc" stroke-width="1.3"><path d="M1 4L3.5 1.5L6 4"/></svg>
<div class="a" style="left:391px;top:544px;width:24.5px;height:24px;border-radius:5px;background:#f9dedc"></div>
<svg class="a" style="left:397.3px;top:550.0px" width="12" height="12" viewBox="0 0 24 24" fill="none" stroke="#4a1210" stroke-width="1.8999999999999997" stroke-linecap="round"><path d="M9 9V6a3 3 0 0 1 6 0v5.5"/><path d="M9.5 13.5A3 3 0 0 0 14.6 13"/><path d="M5.5 11a6.5 6.5 0 0 0 10.3 5.3M18.5 11a6.4 6.4 0 0 1-.6 2.6"/><path d="M12 17.5V21"/><path d="M4 4l16 16"/></svg>
<div class="a" style="left:419.5px;top:544px;width:44px;height:24px;border-radius:12px;background:#28292b"></div>
<svg class="a" style="left:427px;top:553px" width="6" height="4" viewBox="0 0 6 4" fill="none" stroke="#8a8d90" stroke-width="1.1"><path d="M0.8 3.4L3 1.2L5.2 3.4"/></svg>
<div class="a" style="left:439.5px;top:544px;width:24px;height:24px;border-radius:50%;background:#303235"></div>
<svg class="a" style="left:445.6px;top:552px" width="11.5" height="8" viewBox="0 0 11.5 8" fill="none" stroke="#ececec" stroke-width="1.3"><rect x="0.7" y="0.7" width="6.8" height="6.6" rx="0.8"/><path d="M7.5 3.2L10.8 1V7L7.5 4.8z" fill="#ececec"/></svg>
<div class="a" style="left:467.25px;top:544px;width:27.5px;height:24px;border-radius:12px;background:#303235"></div>
<svg class="a" style="left:475px;top:550.5px" width="12" height="11" viewBox="0 0 12 11" fill="none" stroke="#e3e3e3" stroke-width="1.3"><rect x="1.5" y="0.8" width="9" height="7" rx="0.6"/><path d="M0 9.8h12"/><path d="M6 6.5V2.8M4.3 4.3L6 2.6L7.7 4.3"/></svg>
<div class="a" style="left:499.25px;top:544px;width:27.5px;height:24px;border-radius:12px;background:#303235"></div>
<svg class="a" style="left:507px;top:550px" width="12" height="12" viewBox="0 0 12 12" fill="none" stroke="#e3e3e3" stroke-width="1.3"><circle cx="6" cy="6" r="5"/><path d="M3.6 6.8Q6 9.6 8.4 6.8z" fill="#e3e3e3"/><path d="M3.5 4.2L4.6 4.9M8.5 4.2L7.4 4.9"/></svg>
<div class="a" style="left:530.75px;top:544px;width:27.5px;height:24px;border-radius:12px;background:#303235"></div>
<svg class="a" style="left:538.5px;top:551px" width="12" height="10" viewBox="0 0 12 10" fill="none" stroke="#e3e3e3" stroke-width="1.3"><rect x="0.8" y="0.8" width="10.4" height="8.4" rx="1"/><path d="M3 4h2M7 4h2M3 6.3h6"/></svg>
<div class="a" style="left:563.25px;top:544px;width:27.5px;height:24px;border-radius:12px;background:#303235"></div>
<svg class="a" style="left:571px;top:549.5px" width="12" height="13" viewBox="0 0 12 13" fill="#e3e3e3"><path d="M3 12.5C1.5 11 0.6 9 0.6 7.5V5.5c0-.6.4-1 .9-1s.9.4.9 1V7h.6V2.2c0-.6.4-1 .9-1s.9.4.9 1V6h.6V1.2c0-.6.4-1 .9-1s.9.4.9 1V6h.6V2c0-.6.4-1 .9-1s.9.4.9 1V7h.4l.6-1.8c.2-.5.6-.8 1.1-.7.5.1.7.6.6 1.1L10.4 9C9.8 11 8.5 12.5 6.5 12.5z"/></svg>
<div class="a" style="left:594.5px;top:544px;width:18.5px;height:24px;border-radius:9px;background:#303235"></div>
<div class="a" style="left:602.65px;top:551.8px;width:2.2px;height:2.2px;border-radius:50%;background:#e3e3e3"></div><div class="a" style="left:602.65px;top:554.9px;width:2.2px;height:2.2px;border-radius:50%;background:#e3e3e3"></div><div class="a" style="left:602.65px;top:558.0px;width:2.2px;height:2.2px;border-radius:50%;background:#e3e3e3"></div>
<div class="a" style="left:617px;top:544px;width:36px;height:24px;border-radius:12px;background:#dc362e"></div>
<svg class="a" style="left:628.5px;top:552.5px" width="13" height="7" viewBox="0 0 13 7" fill="#fff"><path d="M6.5 0.6C4 0.6 1.9 1.4 0.5 2.8c-.3.3-.3.7 0 1L2 5.3c.3.3.7.3 1 0l1.2-1.1V2.6C5 2.3 5.7 2.2 6.5 2.2s1.5.1 2.3.4v1.6L10 5.3c.3.3.7.3 1 0l1.5-1.5c.3-.3.3-.7 0-1C11.1 1.4 9 .6 6.5.6z"/></svg>
<svg class="a" style="left:928px;top:550px" width="12" height="12" viewBox="0 0 12 12" fill="none" stroke="#f2f2f2" stroke-width="1.3"><circle cx="6" cy="6" r="5"/><path d="M6 5.2V8.8" /><circle cx="6" cy="3.5" r="0.5" fill="#f2f2f2"/></svg>
<svg class="a" style="left:952.5px;top:549.5px" width="12" height="12" viewBox="0 0 12 12" fill="none" stroke="#f2f2f2" stroke-width="1.3"><path d="M1 1.5h10v7H3.5L1 11z"/><path d="M3 4h6M3 6.2h4.5"/></svg>
<div class="a" style="left:960px;top:547.5px;width:4.5px;height:4.5px;border-radius:50%;background:#7cacf8;border:0.8px solid #131314"></div>
<div class="a" style="left:977.9999999999999px;top:551.1999999999999px;width:2.2px;height:2.2px;background:#f2f2f2;border-radius:0.4px"></div>
<div class="a" style="left:977.9999999999999px;top:554.4px;width:2.2px;height:2.2px;background:#f2f2f2;border-radius:0.4px"></div>
<div class="a" style="left:977.9999999999999px;top:557.6px;width:2.2px;height:2.2px;background:#f2f2f2;border-radius:0.4px"></div>
<div class="a" style="left:981.1999999999999px;top:551.1999999999999px;width:2.2px;height:2.2px;background:#f2f2f2;border-radius:0.4px"></div>
<div class="a" style="left:981.1999999999999px;top:554.4px;width:2.2px;height:2.2px;background:#f2f2f2;border-radius:0.4px"></div>
<div class="a" style="left:981.1999999999999px;top:557.6px;width:2.2px;height:2.2px;background:#f2f2f2;border-radius:0.4px"></div>
<div class="a" style="left:984.4px;top:551.1999999999999px;width:2.2px;height:2.2px;background:#f2f2f2;border-radius:0.4px"></div>
<div class="a" style="left:984.4px;top:554.4px;width:2.2px;height:2.2px;background:#f2f2f2;border-radius:0.4px"></div>
<div class="a" style="left:984.4px;top:557.6px;width:2.2px;height:2.2px;background:#f2f2f2;border-radius:0.4px"></div>
<svg class="a" style="left:1000px;top:549px" width="13" height="13" viewBox="0 0 13 13" fill="none" stroke="#f2f2f2" stroke-width="1.3"><rect x="1" y="5" width="8" height="7" rx="1"/><path d="M2.8 5V3.5a2.2 2.2 0 0 1 4.4 0V5"/><circle cx="9.8" cy="10.2" r="2.6" fill="#f2f2f2" stroke="#131314" stroke-width="0.8"/></svg>
<div class="t" style="left:12.2px;top:550.6px;font-size:7px;font-weight:bold;color:#e3e3e3;line-height:10px">16.12</div>
<div class="a" style="left:35.2px;top:552.3px;width:0.9px;height:7px;background:#c8c8c8"></div>
<div class="t" style="left:42.2px;top:550px;font-size:8.5px;font-weight:bold;color:#e3e3e3;line-height:10px;transform:scaleX(0.97);transform-origin:0 0">tqj-vita-nee</div>
</body></html>
